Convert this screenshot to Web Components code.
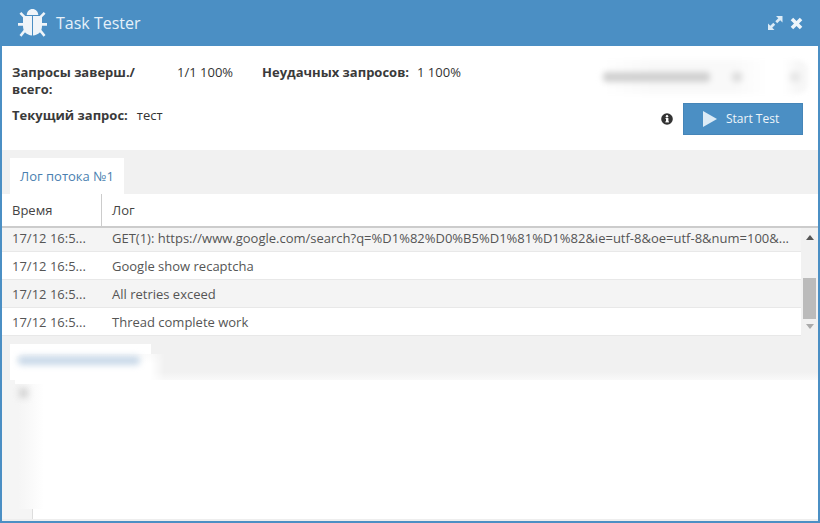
<!DOCTYPE html>
<html><head><meta charset="utf-8"><style>
html,body{margin:0;padding:0;background:#fff}
body{font:13px "Open Sans",sans-serif;color:#333}
</style></head><body>
<task-window></task-window>
<template id="tw"><style>
:host{display:flex;flex-direction:column;width:820px;height:523px;box-sizing:border-box;border:2px solid #4b8fc4;border-top:0;background:#fff;overflow:hidden;font:13px "Open Sans",sans-serif;color:#333}
</style><title-bar></title-bar><stats-panel></stats-panel><log-tabs label="Лог потока №1"></log-tabs><log-table></log-table><blur-pane></blur-pane></template>

<template id="tb"><style>
:host{display:flex;align-items:center;height:46px;flex:none;background:#4b8fc4;margin:0 -2px;padding:0 17px 0 17px;color:#fff}
.t{font-size:16px;margin-left:9px;color:#e6f1f9;flex:1}
svg{display:block}
.a{display:flex;gap:7px;align-items:center}
</style>
<svg width="30" height="28" viewBox="0 0 30 28" fill="#f0f5f9"><path d="M9.700 6C10 2.500 12.300 0 15.500 0s5.500 2.500 5.800 6z"/><path d="M6 7h9v19.500C9.500 26 6 22.500 6 17zM16 7h9v10c0 5.500-3.500 9-9 9.500z"/><path d="M2.500 4.800 4.300 3l4.200 4.200-1.800 1.800zM28.500 4.800 26.700 3l-4.200 4.200 1.800 1.800zM1 14h6v2.700H1zM24 14h6v2.700h-6zM2.500 26 7 20.500l1.900 1.700L4.400 27.700zM28.500 26 24 20.500l-1.900 1.700 4.500 5.500z"/></svg>
<span class="t">Task Tester</span>
<span class="a">
<svg width="16" height="16" viewBox="0 0 16 16" fill="#dcebf6"><path d="M9 1H15.500V7.500L13.200 5.200 10.200 8.200 8.300 6.300 11.300 3.300zM1 8.500V15H7.500L5.200 12.700 8.200 9.700 6.300 7.800 3.300 10.800z"/></svg>
<svg width="13" height="13" viewBox="0 0 13 13" fill="#eef5fa"><path d="M3.200.7 6.500 4 9.800.7 12.300 3.200 9 6.500 12.300 9.800 9.800 12.300 6.500 9 3.200 12.300.7 9.800 4 6.500.7 3.200z"/></svg>
</span></template>

<template id="sp"><style>
:host{display:flex;height:104px;flex:none;background:#fff;box-sizing:border-box;padding:18px 15px 0 10px;justify-content:space-between}
b{font-weight:700;color:#3a3a3a}
.l{display:grid;grid-template-columns:1fr;row-gap:9px;align-content:start;line-height:17px}
.r1{display:flex}
.q{width:135px;flex:none}
.v{width:85px;flex:none;margin-left:30px}
.f{margin-left:8px}
.cur span{margin-left:9px}
.side{display:flex;flex-direction:column;align-items:flex-end}
.blur{display:flex;align-items:center;height:34px;width:205px;margin-top:-4px;margin-right:-5px;border-radius:0 10px 10px 0;background:linear-gradient(90deg,#fff 0,#f9f9f9 50px,#f9f9f9 130px,#fff 165px,#fff 180px,#f7f7f7 195px);filter:blur(2px)}
.blur i{display:block;background:#d0d0d0;height:10px;border-radius:4px;filter:blur(2px)}
.go{display:flex;align-items:center;gap:10px;margin-top:9px}
button{all:unset;display:flex;align-items:center;width:120px;height:32px;box-sizing:border-box;background:#4b8fc4;border:1px solid #4585b8;color:#eef5fa;font:12px "Open Sans",sans-serif;padding-left:19px;gap:9px}
button span{margin-top:-2px}
</style>
<div class="l"><div class="r1"><b class="q">Запросы заверш./ всего:</b><span class="v">1/1 100%</span><b>Неудачных запросов:</b><span class="f">1 100%</span></div>
<div class="cur"><b>Текущий запрос:</b><span>тест</span></div></div>
<div class="side"><div class="blur"><i style="width:107px"></i><i style="width:10px;margin-left:22px;background:#dcdcdc"></i><i style="width:10px;margin-left:48px;background:#e6e6e6"></i></div>
<div class="go"><svg width="12" height="12" viewBox="0 0 12 12"><circle cx="6" cy="6" r="5.800" fill="#333"/><rect x="5" y="5" width="2.400" height="4" fill="#fff"/><rect x="4.300" y="8.400" width="3.700" height="1" fill="#fff"/><rect x="4.500" y="5" width="2" height=".9" fill="#fff"/><circle cx="6" cy="3.300" r="1.200" fill="#fff"/></svg>
<button><svg width="14" height="16" viewBox="0 0 14 16" fill="#dcebf6"><path d="M0 0 14 8 0 16z"/></svg><span>Start Test</span></button></div></div></template>

<template id="lt"><style>
:host{display:flex;height:44px;flex:none;background:#f1f1f1;box-sizing:border-box;padding:8px 0 0 8px}
div{width:114px;height:36px;background:#fff;color:#4a7fb0;line-height:36px;text-align:center}
</style><div></div></template>

<template id="lg"><style>
:host{display:flex;flex-direction:column;flex:none;height:142px;background:#f1f1f1}
.h{display:flex;height:32px;flex:none;background:#fff;border-bottom:2px solid #ccc;line-height:33px;color:#444}
.h span{box-sizing:border-box}
.h .a{width:100px;padding-left:10px;border-right:1px solid #ccc}
.h .b{padding-left:10px}
.b2{display:flex;height:108px}
.rows{width:799px;flex:none}
.sb{flex:1;display:flex;flex-direction:column;align-items:center}
.up{margin-top:7px;width:0;height:0;border:4px solid transparent;border-top:0;border-bottom:5px solid #555}
.th{width:13px;height:41px;background:#bbb;margin-top:38px}
.dn{margin-top:5px;width:0;height:0;border:4px solid transparent;border-bottom:0;border-top:5px solid #aaa}
</style>
<div class="h"><span class="a">Время</span><span class="b">Лог</span></div>
<div class="b2"><div class="rows">
<log-row h="24" p="0 0 3px" bg="#f4f4f4" t="17/12 16:5..." m="GET(1): https://www.google.com/search?q=%D1%82%D0%B5%D1%81%D1%82&amp;ie=utf-8&amp;oe=utf-8&amp;num=100&amp;..."></log-row>
<log-row h="28" p="0 0 0" bg="#fff" t="17/12 16:5..." m="Google show recaptcha"></log-row>
<log-row h="28" p="0 0 0" bg="#f4f4f4" t="17/12 16:5..." m="All retries exceed"></log-row>
<log-row h="28" p="0 0 0" bg="#fff" t="17/12 16:5..." m="Thread complete work"></log-row>
</div><div class="sb"><i class="up"></i><i class="th"></i><i class="dn"></i></div></div></template>

<template id="lr"><style>
:host{display:flex;box-sizing:border-box;border-bottom:1px solid #e8e8e8;color:#555;align-items:center}
.t{width:100px;padding-left:10px;box-sizing:border-box;flex:none}
.m{padding-left:10px;white-space:nowrap}
</style><span class="t"></span><span class="m"></span></template>

<template id="bp"><style>
:host{display:flex;flex-direction:column;flex:1;min-height:0;background:#f1f1f1;position:relative}
.top{height:44px;flex:none;box-sizing:border-box;padding-top:8px;padding-left:8px}
.tab{width:141px;height:36px;background:#fff}
.soft{position:absolute;left:13px;top:18px;width:152px;height:30px;border-radius:8px 0 0 0;background:linear-gradient(180deg,#fafafa,#fff 30%);-webkit-mask-image:linear-gradient(90deg,#000 135px,transparent 150px)}
.tx{position:absolute;left:16px;top:20px;width:122px;height:9px;border-radius:4px;background:#c8d8e8;filter:blur(3px)}
.tf{position:absolute;left:148px;right:0;top:36px;height:14px;z-index:1;background:linear-gradient(180deg,rgba(255,255,255,0),#fff)}
.body{flex:1;background:#fff;position:relative;display:flex}
.gut{width:30px;flex:none;background:#f5f5f5}
.fade{position:absolute;left:0;top:0;width:44px;bottom:12px;background:linear-gradient(90deg,rgba(255,255,255,0) 0,rgba(255,255,255,0) 16px,#fafafa 30px,#fff 42px),#f5f5f5}
.gi{position:absolute;left:17px;top:8px;width:9px;height:10px;background:#d4d4d4;filter:blur(3px)}
.line{position:absolute;left:30px;bottom:2px;height:10px;width:1px;background:#ddd}
.base{position:absolute;left:0;right:0;bottom:0;height:2px;background:#eee}
</style><div class="top"><div class="tab"></div></div>
<div class="body"><div class="gut"></div><div class="fade"></div><div class="gi"></div><div class="line"></div><div class="base"></div></div>
<div class="soft"></div><div class="tx"></div><div class="tf"></div></template>

<script>
const mk=(n,id,f)=>customElements.define(n,class extends HTMLElement{connectedCallback(){if(this.shadowRoot)return;const s=this.attachShadow({mode:'open'});s.appendChild(document.getElementById(id).content.cloneNode(true));f&&f.call(this,s)}});
mk('title-bar','tb');mk('stats-panel','sp');mk('log-table','lg');mk('blur-pane','bp');
mk('log-tabs','lt',function(s){s.querySelector('div').textContent=this.getAttribute('label')});
mk('log-row','lr',function(s){this.style.height=this.getAttribute('h')+'px';this.style.padding=this.getAttribute('p');this.style.background=this.getAttribute('bg');s.querySelector('.t').textContent=this.getAttribute('t');s.querySelector('.m').textContent=this.getAttribute('m')});
mk('task-window','tw');
</script></body></html>
